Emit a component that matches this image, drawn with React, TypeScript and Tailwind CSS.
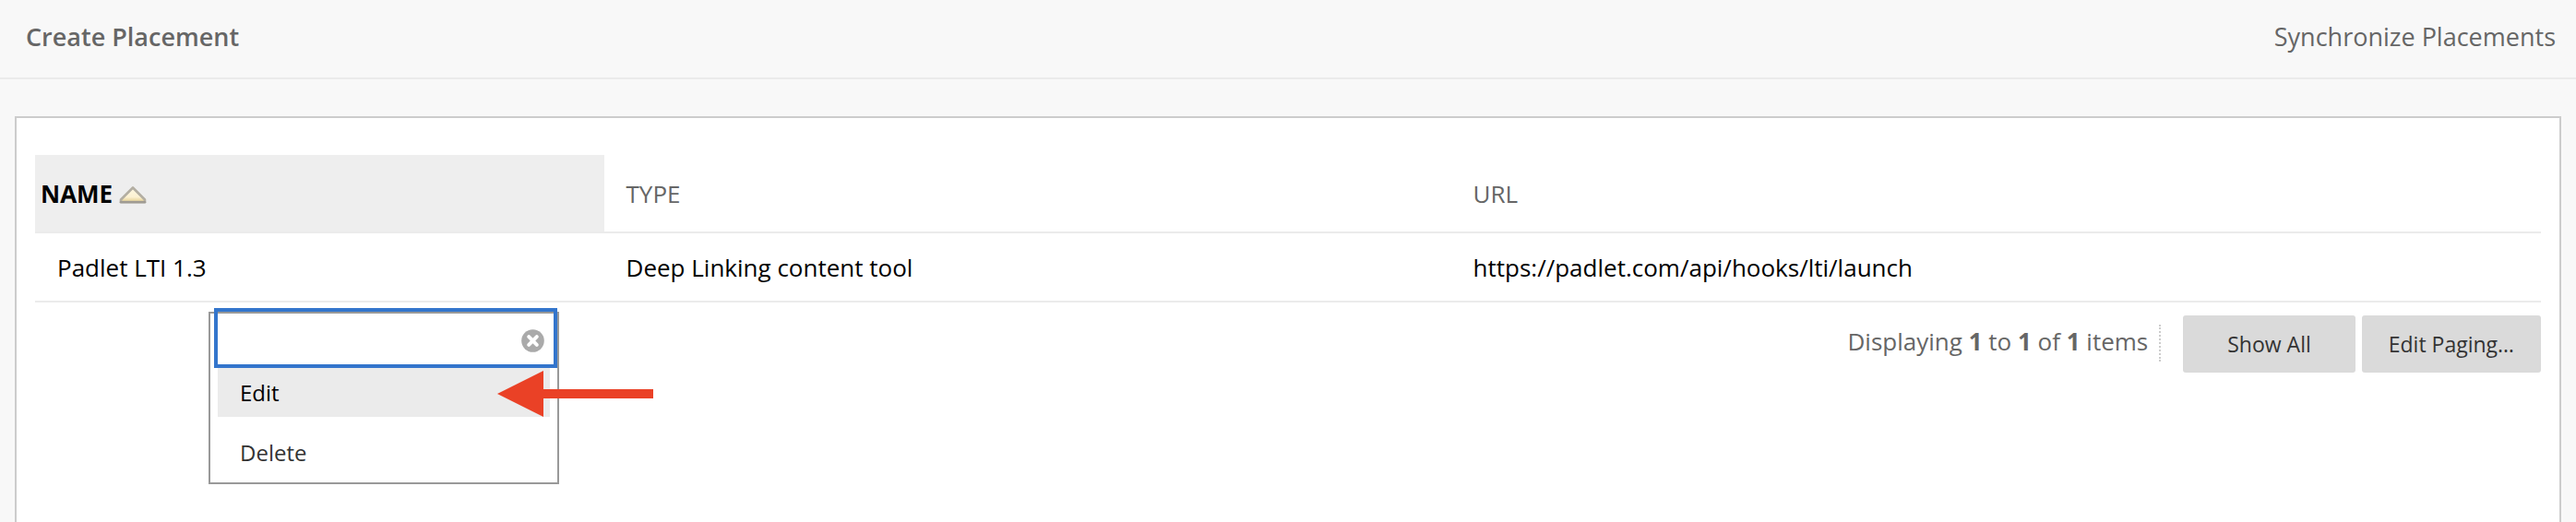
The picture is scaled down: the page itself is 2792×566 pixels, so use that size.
import React from "react";

const placements = [
  {
    name: "Padlet LTI 1.3",
    type: "Deep Linking content tool",
    url: "https://padlet.com/api/hooks/lti/launch",
  },
];

function SortIcon() {
  return (
    <svg width="30" height="22" viewBox="0 0 30 22" aria-hidden="true">
      <defs>
        <linearGradient id="sort-fill" x1="0" y1="0" x2="0" y2="1">
          <stop offset="0" stopColor="#fdf8e2" />
          <stop offset="0.65" stopColor="#fcf1d2" />
          <stop offset="1" stopColor="#e3cd8c" />
        </linearGradient>
      </defs>
      <path
        d="M15 4.5 L28 17.5 V20 H2 V17.5 Z"
        fill="url(#sort-fill)"
        stroke="#b3aea2"
        strokeWidth="2.6"
        strokeLinejoin="round"
      />
      <path d="M2 20.2 H28" stroke="#9f9b93" strokeWidth="2.6" strokeLinecap="round" />
    </svg>
  );
}

function ClearIcon() {
  return (
    <svg width="25" height="25" viewBox="0 0 25 25" aria-hidden="true">
      <circle cx="12.5" cy="12.5" r="12.3" fill="#aaaaaa" />
      <path
        d="M8.2 8.2 L16.8 16.8 M16.8 8.2 L8.2 16.8"
        stroke="#fff"
        strokeWidth="4"
        strokeLinecap="round"
      />
    </svg>
  );
}

function Arrow() {
  return (
    <svg
      className="pointer-events-none absolute left-[311px] top-[62px]"
      width="169"
      height="50"
      viewBox="0 0 169 50"
      aria-hidden="true"
    >
      <path d="M0 25 L50 0 V20 H169 V30 H50 V50 Z" fill="#ea4126" />
    </svg>
  );
}

function ContextMenu() {
  return (
    <div className="absolute left-[188px] top-[10px] w-[380px] border-2 border-[#999] pb-[6px] text-[24px] leading-[33px]">
      <div className="relative -mt-[6px] ml-1 flex">
        <input
          aria-label="Filter menu"
          className="h-[65px] w-full border-4 border-[#3375cc] bg-transparent px-4 outline-none"
        />
        <button aria-label="Close menu" className="absolute right-[14px] top-[23px]">
          <ClearIcon />
        </button>
      </div>
      <div className="mx-2 flex flex-col gap-3">
        <button className="bg-[#ebebeb] px-6 py-[10px] text-left text-black">Edit</button>
        <button className="px-6 py-[10px] text-left text-[#333]">Delete</button>
      </div>
      <Arrow />
    </div>
  );
}

export default function App() {
  return (
    <div className="flex min-h-screen flex-col bg-[#f8f8f8] font-['Open_Sans',sans-serif] text-[26px] leading-[36px]">
      <header className="flex h-[86px] items-center justify-between border-b-2 border-[#ebebeb] px-[22px] pb-1 pl-7 text-[27px] text-[#666]">
        <a href="#create" className="font-semibold">
          Create Placement
        </a>
        <a href="#synchronize">Synchronize Placements</a>
      </header>

      <main className="mx-4 mt-10 flex-1 border-2 border-b-0 border-[#ccc] bg-white px-5 pt-10">
        <table className="w-full table-fixed border-collapse text-left">
          <thead>
            <tr className="h-[84px] border-b-2 border-[#ebebeb] text-[#666]">
              <th className="w-[22.7%] bg-[#eeeeee] px-[6px] font-bold text-black">
                <button className="flex items-center gap-[7px]">
                  NAME <SortIcon />
                </button>
              </th>
              <th className="w-[33.8%] px-6 font-normal">TYPE</th>
              <th className="px-6 font-normal">URL</th>
            </tr>
          </thead>
          <tbody>
            {placements.map((p) => (
              <tr key={p.name} className="h-[75px] border-b-2 border-[#ebebeb] text-black">
                <td className="px-6">{p.name}</td>
                <td className="px-6">{p.type}</td>
                <td className="px-6">{p.url}</td>
              </tr>
            ))}
          </tbody>
        </table>

        <div className="relative flex justify-end pt-[14px]">
          <p className="mt-[10px] h-[40px] border-r-2 border-dotted border-[#ccc] pr-3 text-[#666]">
            Displaying <b>1</b> to <b>1</b> of <b>1</b> items
          </p>
          <div className="ml-6 flex gap-[7px] text-[23px] leading-[32px] text-[#333]">
            <button className="h-[62px] rounded-[3px] bg-[#dadada] px-12">Show All</button>
            <button className="h-[62px] rounded-[3px] bg-[#dadada] px-[29px]">Edit Paging…</button>
          </div>
          <ContextMenu />
        </div>
      </main>
    </div>
  );
}
